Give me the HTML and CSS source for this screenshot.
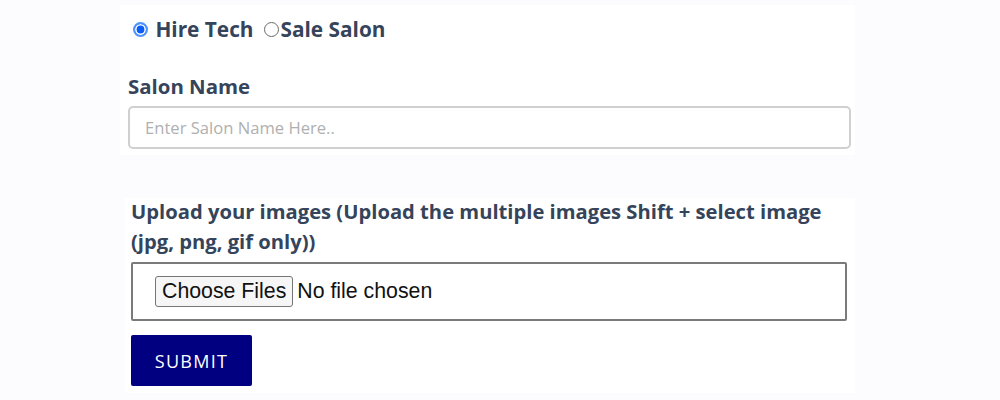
FILE: index.html
```html
<!DOCTYPE html>
<html>
<head>
<meta charset="utf-8">
<link rel="stylesheet" href="styles.css">
</head>
<body>
<div class="page">
  <form class="panel panel-top">
    <div class="radios">
      <label class="radio-label"><input class="radio" type="radio" name="kind" checked> Hire Tech</label>
      <label class="radio-label"><input class="radio" type="radio" name="kind">Sale Salon</label>
    </div>
    <label class="field-label" for="salon">Salon Name</label>
    <input class="text-input" id="salon" type="text" placeholder="Enter Salon Name Here..">
  </form>
  <div class="panel panel-bottom">
    <label class="upload-label" for="files">Upload your images (Upload the multiple images Shift + select image (jpg, png, gif only))</label>
    <div class="file-box">
      <input class="file-input" id="files" type="file" multiple>
    </div>
    <button class="submit" type="button">SUBMIT</button>
  </div>
</div>
</body>
</html>
```

FILE: styles.css
```css
html, body {
  margin: 0;
  padding: 0;
  background: #fcfbfe;
}
body {
  font-family: "Open Sans", "Noto Sans", sans-serif;
  color: #35445a;
}
.page {
  display: flex;
  flex-direction: column;
  padding-top: 5px;
  height: 395px;
  box-sizing: border-box;
}
.panel {
  background: #ffffff;
  box-sizing: border-box;
}
.panel-top {
  margin: 0 0 0 120px;
  width: 735px;
  height: 150px;
  padding: 12px 4px 0 8px;
  display: flex;
  flex-direction: column;
}
.radios {
  display: flex;
  align-items: center;
  font-size: 20.8px;
  font-weight: 700;
  line-height: 24px;
}
.radio-label {
  display: flex;
  align-items: center;
  white-space: pre;
  margin-right: 5px;
}
.radio {
  -webkit-appearance: none;
  appearance: none;
  flex: none;
  box-sizing: border-box;
  width: 15px;
  height: 15px;
  margin: 1px 2px 0 5px;
  border-radius: 50%;
  border: 1.2px solid #6a6a6a;
  background: #ffffff;
}
.radio:checked {
  border: 2px solid #4f95ff;
  background: #0a5df5;
  box-shadow: inset 0 0 0 1.6px #ffffff;
}
.field-label {
  margin-top: 32px;
  font-size: 20.4px;
  font-weight: 700;
  line-height: 26px;
}
.text-input {
  margin-top: 7px;
  width: 723px;
  height: 43px;
  box-sizing: border-box;
  border: 2px solid #d0d0d0;
  border-radius: 5px;
  padding: 0 15px;
  font-family: "Open Sans", "Noto Sans", sans-serif;
  font-size: 16.6px;
  color: #354052;
  outline: none;
}
.text-input::placeholder {
  color: #b0b0b0;
}
.panel-bottom {
  margin: 43px 0 0 125px;
  width: 730px;
  height: 195px;
  padding: 0 0 0 6px;
  display: flex;
  flex-direction: column;
  align-items: flex-start;
}
.upload-label {
  margin-top: -2px;
  font-size: 20.2px;
  font-weight: 700;
  line-height: 30px;
  width: 715px;
}
.file-box {
  margin-top: 6px;
  width: 716px;
  height: 59px;
  box-sizing: border-box;
  border: 2px solid #7a7a7a;
  border-radius: 2px;
  padding: 12px 22px;
  display: flex;
  align-items: center;
}
.file-input {
  font-family: "Liberation Sans", Arial, sans-serif;
  font-size: 21.3px;
  color: #111;
}
.file-input::file-selector-button {
  font-family: "Liberation Sans", Arial, sans-serif;
  font-size: 21.3px;
  padding: 2px 6px;
  margin-right: 4px;
  background: #f6f6f6;
  border: 1px solid #767676;
  border-radius: 3px;
  color: #111;
}
.submit {
  margin-top: 14px;
  width: 121px;
  height: 51px;
  background: #000080;
  color: #ffffff;
  border: none;
  border-radius: 2px;
  font-family: "Open Sans", "Noto Sans", sans-serif;
  font-size: 18px;
  letter-spacing: 1.3px;
}
```
